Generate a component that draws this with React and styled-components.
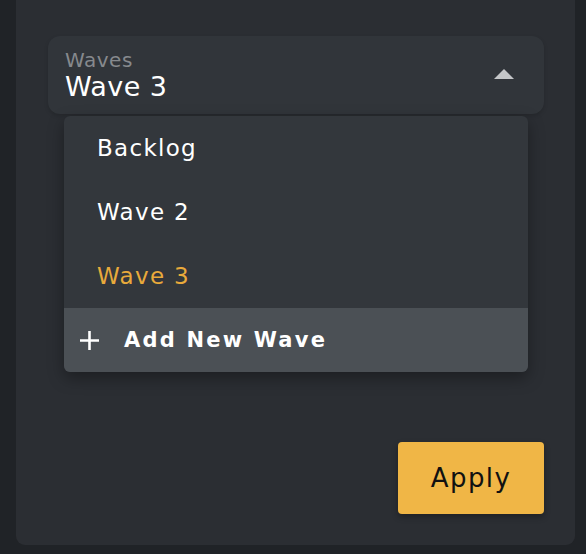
import React, { useState } from 'react';
import styled, { createGlobalStyle } from 'styled-components';

const GlobalStyle = createGlobalStyle`
  html, body {
    margin: 0;
    padding: 0;
    background: #202327;
    font-family: 'DejaVu Sans', 'Noto Sans', sans-serif;
  }
`;

const Page = styled.div`
  width: 586px;
  height: 554px;
  padding: 0 11px 0 16px;
  box-sizing: border-box;
  overflow: hidden;
`;

const Panel = styled.div`
  height: 545px;
  background: #2b2e33;
  border-radius: 0 0 9px 9px;
  padding: 36px 31px 31px 32px;
  box-sizing: border-box;
  display: flex;
  flex-direction: column;
  justify-content: space-between;
`;

const SelectWrap = styled.div`
  position: relative;
`;

const SelectBox = styled.div`
  height: 78px;
  background: #31353a;
  border-radius: 12px;
  box-shadow: 0 2px 4px rgba(0, 0, 0, 0.15);
  padding: 13px 30px 11px 17px;
  box-sizing: border-box;
  display: flex;
  align-items: center;
  justify-content: space-between;
`;

const SelectText = styled.div`
  display: flex;
  flex-direction: column;
`;

const Label = styled.span`
  font-size: 20px;
  line-height: 22px;
  letter-spacing: 0.5px;
  color: #86898d;
`;

const Value = styled.span`
  font-size: 27px;
  line-height: 32px;
  letter-spacing: 0.4px;
  color: #ffffff;
`;

const Caret = styled.div`
  width: 0;
  height: 0;
  border-left: 10px solid transparent;
  border-right: 10px solid transparent;
  border-bottom: 10px solid #c4c6c8;
  margin-top: -4px;
`;

const Menu = styled.ul`
  position: absolute;
  top: 80px;
  left: 16px;
  right: 16px;
  margin: 0;
  padding: 0;
  list-style: none;
  background: #33373c;
  border-radius: 6px;
  overflow: hidden;
  box-shadow: 0 6px 16px rgba(0, 0, 0, 0.35);
  z-index: 5;
`;

const Item = styled.li`
  height: 64px;
  display: flex;
  align-items: center;
  padding-left: 33px;
  font-size: 23px;
  letter-spacing: 1.3px;
  color: ${p => (p.$active ? '#e9aa3b' : '#ffffff')};
  cursor: pointer;
`;

const AddRow = styled.li`
  height: 64px;
  display: flex;
  align-items: center;
  gap: 24px;
  padding-left: 15px;
  background: #4b5055;
  color: #ffffff;
  font-size: 21px;
  font-weight: 700;
  letter-spacing: 2.2px;
  cursor: pointer;
`;

const ApplyButton = styled.button`
  align-self: flex-end;
  width: 146px;
  height: 72px;
  border: none;
  border-radius: 4px;
  background: #f0b646;
  color: #111111;
  font-family: inherit;
  font-size: 26px;
  letter-spacing: 1.4px;
  box-shadow: 0 3px 6px rgba(0, 0, 0, 0.3);
  cursor: pointer;
`;

const PlusIcon = () => (
  <svg width="21" height="21" viewBox="0 0 21 21">
    <path d="M10.5 1v19M1 10.5h19" stroke="#ffffff" strokeWidth="2.6" fill="none" />
  </svg>
);

const waves = ['Backlog', 'Wave 2', 'Wave 3'];

export default function App() {
  const [selected, setSelected] = useState('Wave 3');
  return (
    <Page>
      <GlobalStyle />
      <Panel>
        <SelectWrap>
          <SelectBox>
            <SelectText>
              <Label>Waves</Label>
              <Value>{selected}</Value>
            </SelectText>
            <Caret />
          </SelectBox>
          <Menu>
            {waves.map(w => (
              <Item key={w} $active={w === selected} onClick={() => setSelected(w)}>
                {w}
              </Item>
            ))}
            <AddRow>
              <PlusIcon />
              Add New Wave
            </AddRow>
          </Menu>
        </SelectWrap>
        <ApplyButton>Apply</ApplyButton>
      </Panel>
    </Page>
  );
}
